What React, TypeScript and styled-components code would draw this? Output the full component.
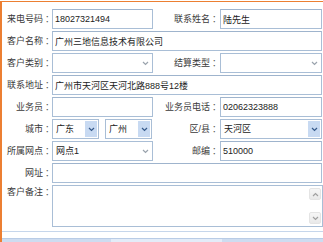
import React from "react";
import styled, { createGlobalStyle } from "styled-components";

const Global = createGlobalStyle`
  html, body { margin: 0; padding: 0; background: #fff; }
  body { font-family: "Liberation Sans", "Noto Sans CJK SC", sans-serif; font-size: 9px; color: #333; }
  * { box-sizing: border-box; }
`;

const Panel = styled.div`
  margin-top: 1px;
  height: 241px;
  border-top: 1px solid #ec7f32;
  border-left: 2px solid #ec7f32;
  display: flex;
  flex-direction: column;
`;

const Form = styled.div`
  padding-top: 7px;
  display: grid;
  grid-template-columns: 50px 101px 67px 102px;
  grid-template-rows: repeat(8, 20px) 42px;
  row-gap: 2px;
`;

const LabelBox = styled.div<{ $pad?: number; $top?: boolean }>`
  text-align: right;
  line-height: ${(p) => (p.$top ? "14px" : "20px")};
  white-space: nowrap;
  padding-right: ${(p) => p.$pad ?? 0}px;
  color: #3a3a3a;
  font-size: 9px;
`;

const Colon = styled.span`
  display: inline-block;
  margin-left: 2px;
  width: 7px;
  text-align: left;
  color: #555;
`;

const Field = styled.input<{ $span?: number }>`
  grid-column: span ${(p) => p.$span ?? 1};
  height: 20px;
  width: 100%;
  border: 1px solid #a9bed6;
  border-top-color: #9fb4cd;
  background: #fff;
  padding: 0 2px;
  font-family: "Liberation Sans", "Noto Sans CJK SC", sans-serif;
  font-size: 9px;
  color: #222;
  outline: none;
`;

const SelectBox = styled.div<{ $w?: number }>`
  height: 20px;
  width: ${(p) => (p.$w ? `${p.$w}px` : "100%")};
  border: 1px solid #a9bed6;
  background: #fff;
  display: flex;
  align-items: stretch;
`;

const SelectText = styled.div`
  flex: 1;
  padding-left: 3px;
  line-height: 18px;
  color: #222;
  white-space: nowrap;
  overflow: hidden;
`;

const Arrow = styled.div<{ $active?: boolean }>`
  width: 12px;
  margin: 1px;
  display: flex;
  align-items: center;
  justify-content: center;
  background: ${(p) => (p.$active ? "#c8daf2" : "transparent")};
  color: ${(p) => (p.$active ? "#35598a" : "#9aa3ad")};
`;

const Pair = styled.div`
  display: flex;
  gap: 6px;
`;

const Memo = styled.div`
  grid-column: span 3;
  border: 1px solid #a9bed6;
  display: flex;
  height: 42px;
  width: 271px;
`;

const MemoArea = styled.textarea`
  flex: 1;
  border: none;
  resize: none;
  outline: none;
  font-family: "Liberation Sans", "Noto Sans CJK SC", sans-serif;
  font-size: 9px;
`;

const ScrollBar = styled.div`
  width: 14px;
  display: flex;
  flex-direction: column;
  justify-content: space-between;
  padding: 2px 1px;
  background: #fff;
`;

const ScrollBtn = styled.div`
  height: 12px;
  border-radius: 2px;
  background: linear-gradient(#f6f6f6, #e9e9e9);
  border: 1px solid #e4e4e4;
  display: flex;
  align-items: center;
  justify-content: center;
  color: #a0a0a0;
`;

const Footer = styled.div`
  margin-top: 4px;
  border-top: 1px solid #c6d6eb;
  flex: 1;
  display: flex;
  flex-direction: column;
  justify-content: flex-end;
`;

const TabBar = styled.div`
  height: 4px;
  background: #cddcf0;
  border-top: 1px solid #b9cce6;
  display: grid;
  grid-template-columns: 49px 56px 111px 1fr;
  gap: 2px;
`;

const Tab = styled.div<{ $light?: boolean }>`
  background: ${(p) => (p.$light ? "#e3ecf8" : "#cddcf0")};
`;

const Label = ({ text, pad, top }: { text: string; pad?: number; top?: boolean }) => (
  <LabelBox $pad={pad} $top={top}>
    {text}
    <Colon>：</Colon>
  </LabelBox>
);

const Chevron = ({ up }: { up?: boolean }) => (
  <svg width="7" height="5" viewBox="0 0 7 5">
    <polyline
      points={up ? "1,4 3.5,1.5 6,4" : "1,1 3.5,3.5 6,1"}
      fill="none"
      stroke="currentColor"
      strokeWidth="1.2"
    />
  </svg>
);

const Select = ({ value, active, w }: { value?: string; active?: boolean; w?: number }) => (
  <SelectBox $w={w}>
    <SelectText>{value}</SelectText>
    <Arrow $active={active}>
      <Chevron />
    </Arrow>
  </SelectBox>
);

export default function App() {
  return (
    <>
      <Global />
      <Panel>
        <Form>
          <Label text="来电号码" />
          <Field defaultValue="18027321494" />
          <Label text="联系姓名" pad={1} />
          <Field defaultValue="陆先生" />

          <Label text="客户名称" />
          <Field $span={3} defaultValue="广州三地信息技术有限公司" />

          <Label text="客户类别" />
          <Select />
          <Label text="结算类型" pad={1} />
          <Select />

          <Label text="联系地址" />
          <Field $span={3} defaultValue="广州市天河区天河北路888号12楼" />

          <Label text="业务员" />
          <Field />
          <Label text="业务员电话" pad={1} />
          <Field defaultValue="02062323888" />

          <Label text="城市" />
          <Pair>
            <Select w={47} value="广东" active />
            <Select w={47} value="广州" active />
          </Pair>
          <Label text="区/县" pad={1} />
          <Select value="天河区" active />

          <Label text="所属网点" />
          <Select value="网点1" />
          <Label text="邮编" pad={1} />
          <Field defaultValue="510000" />

          <Label text="网址" />
          <Field $span={3} />

          <Label text="客户备注" top />
          <Memo>
            <MemoArea />
            <ScrollBar>
              <ScrollBtn>
                <Chevron up />
              </ScrollBtn>
              <ScrollBtn>
                <Chevron />
              </ScrollBtn>
            </ScrollBar>
          </Memo>
        </Form>
        <Footer>
          <TabBar>
            <Tab />
            <Tab />
            <Tab $light />
            <Tab />
          </TabBar>
        </Footer>
      </Panel>
    </>
  );
}
